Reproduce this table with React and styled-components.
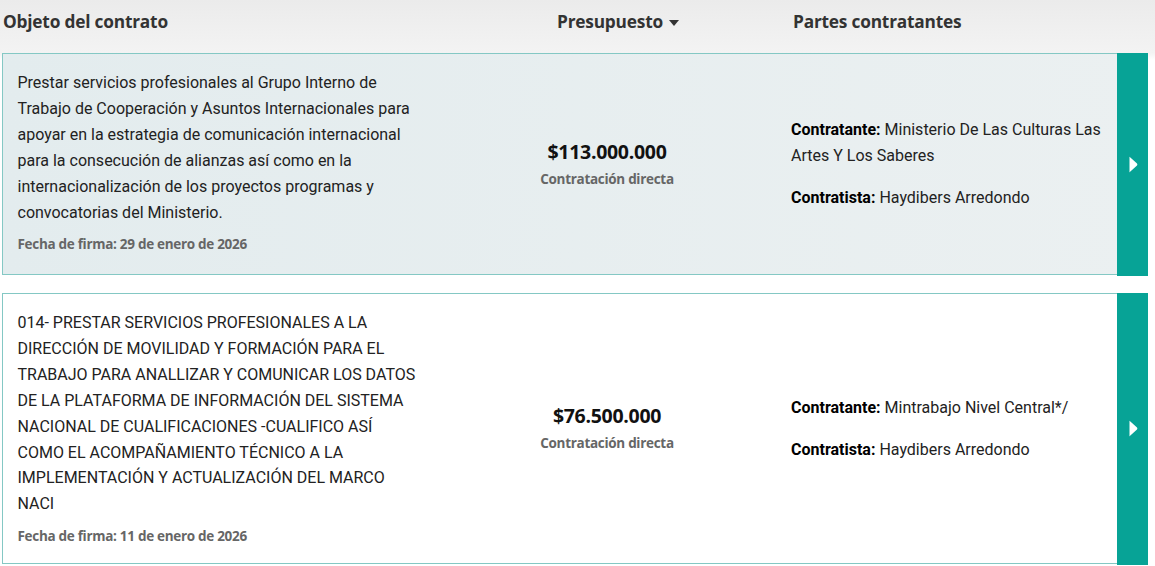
import React from 'react';
import styled, { createGlobalStyle } from 'styled-components';

const GlobalStyle = createGlobalStyle`
  html, body {
    margin: 0;
    padding: 0;
    background: #ffffff;
  }
  body {
    font-family: Roboto, "Liberation Sans", sans-serif;
    color: #222;
  }
`;

const Page = styled.div`
  width: 1155px;
  min-height: 566px;
  background: linear-gradient(to bottom, #ebebeb 0px, #f3f3f3 53px, #ffffff 60px);
`;

const HeaderRow = styled.div`
  display: grid;
  grid-template-columns: 470px 268px 1fr;
  height: 53px;
  align-items: center;
  padding: 0 7px 0 3px;
  box-sizing: border-box;
`;

const HeaderCell = styled.div`
  font-family: "Open Sans", "Liberation Sans", sans-serif;
  font-weight: 700;
  font-size: 17.3px;
  color: #333;
  margin-top: -10px;
  letter-spacing: -0.2px;
  display: flex;
  align-items: center;
  justify-content: ${(p) => (p.$center ? 'center' : 'flex-start')};
  padding-left: ${(p) => p.$pad || 0}px;
`;

const SortCaret = styled.span`
  display: inline-block;
  width: 0;
  height: 0;
  margin-left: 6px;
  margin-top: 2px;
  border-left: 5px solid transparent;
  border-right: 5px solid transparent;
  border-top: 6px solid #333;
`;

const List = styled.div`
  display: flex;
  flex-direction: column;
  gap: 18px;
  padding: 0 7px 0 2px;
`;

const Card = styled.div`
  display: grid;
  grid-template-columns: 470px 268px 1fr 31px;
  border: 1.5px solid #84c8c4;
  border-right: none;
  background: ${(p) => (p.$highlight ? 'linear-gradient(to right, #e3ecee, #ebf0f1)' : '#ffffff')};
  min-height: ${(p) => p.$h}px;
  box-sizing: border-box;
`;

const ObjectCol = styled.div`
  padding: 16px 53px 16px 14.5px;
`;

const Description = styled.p`
  margin: 0;
  font-size: 16px;
  line-height: 25.9px;
  color: #222;
`;

const SignDate = styled.div`
  margin-top: 10px;
  font-family: "Open Sans", "Liberation Sans", sans-serif;
  font-weight: 700;
  font-size: 13.5px;
  color: #666;
  letter-spacing: -0.3px;
`;

const BudgetCol = styled.div`
  display: flex;
  flex-direction: column;
  align-items: center;
  justify-content: center;
  gap: 5px;
`;

const Amount = styled.div`
  font-family: "Open Sans", "Liberation Sans", sans-serif;
  font-weight: 700;
  font-size: 19.5px;
  color: #111;
  letter-spacing: -0.3px;
  margin-top: -3px;
`;

const Modality = styled.div`
  font-family: "Open Sans", "Liberation Sans", sans-serif;
  font-weight: 700;
  font-size: 13.5px;
  color: #666;
  letter-spacing: -0.3px;
`;

const PartiesCol = styled.div`
  display: flex;
  flex-direction: column;
  justify-content: center;
  gap: 16px;
  padding: 0 8px 0 50px;
`;

const Party = styled.div`
  font-size: 16px;
  line-height: 26px;
  color: #222;

  b {
    font-weight: 700;
    color: #000;
  }
`;

const GoButton = styled.div`
  background: #07a396;
  display: flex;
  align-items: center;
  justify-content: center;
  margin: -1.5px 0;
  cursor: pointer;
`;

const contracts = [
  {
    id: 1,
    highlight: true,
    h: 222,
    object:
      'Prestar servicios profesionales al Grupo Interno de Trabajo de Cooperación y Asuntos Internacionales para apoyar en la estrategia de comunicación internacional para la consecución de alianzas así como en la internacionalización de los proyectos programas y convocatorias del Ministerio.',
    date: '29 de enero de 2026',
    amount: '$113.000.000',
    modality: 'Contratación directa',
    contratante: 'Ministerio De Las Culturas Las Artes Y Los Saberes',
    contratista: 'Haydibers Arredondo',
  },
  {
    id: 2,
    highlight: false,
    h: 271,
    object:
      '014- PRESTAR SERVICIOS PROFESIONALES A LA DIRECCIÓN DE MOVILIDAD Y FORMACIÓN PARA EL TRABAJO PARA ANALLIZAR Y COMUNICAR LOS DATOS DE LA PLATAFORMA DE INFORMACIÓN DEL SISTEMA NACIONAL DE CUALIFICACIONES -CUALIFICO ASÍ COMO EL ACOMPAÑAMIENTO TÉCNICO A LA IMPLEMENTACIÓN Y ACTUALIZACIÓN DEL MARCO NACI',
    date: '11 de enero de 2026',
    amount: '$76.500.000',
    modality: 'Contratación directa',
    contratante: 'Mintrabajo Nivel Central*/',
    contratista: 'Haydibers Arredondo',
  },
];

const ArrowIcon = () => (
  <svg width="10" height="17" viewBox="0 0 10 17">
    <path d="M1.5 1.2 Q1 0.5 1.8 1 L9 7.6 Q9.8 8.5 9 9.4 L1.8 16 Q1 16.5 1.5 15.8 Z" fill="#ffffff" />
  </svg>
);

const App = () => (
  <Page>
    <GlobalStyle />
    <HeaderRow>
      <HeaderCell>Objeto del contrato</HeaderCell>
      <HeaderCell $center $pad={22}>
        Presupuesto
        <SortCaret />
      </HeaderCell>
      <HeaderCell $pad={52}>Partes contratantes</HeaderCell>
    </HeaderRow>
    <List>
      {contracts.map((c) => (
        <Card key={c.id} $highlight={c.highlight} $h={c.h}>
          <ObjectCol>
            <Description>{c.object}</Description>
            <SignDate>Fecha de firma: {c.date}</SignDate>
          </ObjectCol>
          <BudgetCol>
            <Amount>{c.amount}</Amount>
            <Modality>{c.modality}</Modality>
          </BudgetCol>
          <PartiesCol>
            <Party>
              <b>Contratante:</b> {c.contratante}
            </Party>
            <Party>
              <b>Contratista:</b> {c.contratista}
            </Party>
          </PartiesCol>
          <GoButton>
            <ArrowIcon />
          </GoButton>
        </Card>
      ))}
    </List>
  </Page>
);

export default App;
